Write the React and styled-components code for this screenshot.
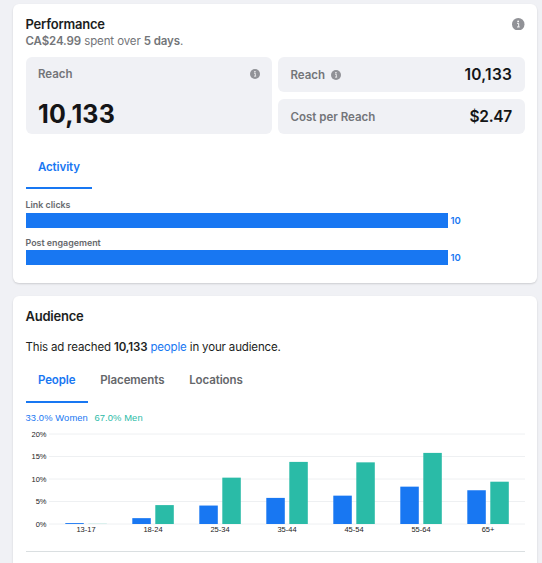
import styled, { createGlobalStyle } from 'styled-components'

const GlobalStyle = createGlobalStyle`
    * {
        box-sizing: border-box;
    }

    body {
        margin: 0;
        background-color: #f0f1f5;
        font-family: Inter, "Liberation Sans", sans-serif;
        color: #1c1e21;
        overflow: hidden;
    }
`;

const Page = styled.main`
    height: 563px;
    padding: 4px 5px 0 13px;
    display: flex;
    flex-direction: column;
    gap: 12.5px;
    overflow: hidden;
`;

const Card = styled.section`
    flex: none;
    height: ${({ $height }) => $height}px;
    padding: 12px 12.5px 0 12.5px;
    background-color: #fff;
    border-radius: 6px;
    box-shadow: 0 1px 2px #00000026;
`;

const CardHeader = styled.header`
    display: flex;
    align-items: center;
    justify-content: space-between;
    height: 16px;
`;

const Title = styled.h2`
    margin: 0;
    font-size: 13px;
    font-weight: 600;
    line-height: 16px;
    letter-spacing: -0.22px;
`;

const Spent = styled.p`
    margin: 1px 0 0;
    font-size: 11.5px;
    line-height: 16px;
    letter-spacing: -0.11px;
    color: #737579;

    b {
        font-weight: 600;
    }
`;

const Metrics = styled.div`
    margin-top: 8px;
    display: grid;
    grid-template-columns: 1fr 1fr;
    grid-template-rows: 35px 35px;
    gap: 7px 6px;
`;

const Metric = styled.div`
    padding: 0 12.5px;
    display: flex;
    align-items: center;
    justify-content: space-between;
    background-color: #f0f1f5;
    border-radius: 6px;
`;

const MainMetric = styled(Metric)`
    grid-row: span 2;
    padding: 9px 12.5px 5px;
    flex-direction: column;
    align-items: stretch;
`;

const MetricHead = styled.div`
    display: flex;
    align-items: center;
    justify-content: ${({ $spread }) => ($spread ? 'space-between' : 'flex-start')};
    gap: 6px;
`;

const MetricLabel = styled.span`
    font-size: 11.5px;
    font-weight: 600;
    line-height: 16px;
    color: #737579;
`;

const MetricValue = styled.strong`
    font-size: ${({ $large }) => ($large ? 25 : 15.5)}px;
    font-weight: ${({ $large }) => ($large ? 700 : 600)};
    line-height: ${({ $large }) => ($large ? 30 : 20)}px;
    letter-spacing: ${({ $spacing }) => $spacing || 0}px;
    color: #141517;
`;

const Tabs = styled.nav`
    margin-top: ${({ $top }) => $top}px;
    display: flex;
`;

const Tab = styled.button`
    height: 45px;
    padding: 2px 12.4px 0;
    border: 0;
    border-bottom: 2px solid ${({ $active }) => ($active ? '#1877f2' : 'transparent')};
    background: none;
    font-family: inherit;
    font-size: 11.5px;
    font-weight: 600;
    letter-spacing: -0.09px;
    color: ${({ $active }) => ($active ? '#1877f2' : '#65676b')};
`;

const Activities = styled.div`
    margin-top: 10px;
    display: flex;
    flex-direction: column;
    gap: 9px;
`;

const ActivityLabel = styled.div`
    height: 13.6px;
    font-size: 8.9px;
    font-weight: 600;
    line-height: 12px;
    color: #65676b;
`;

const ActivityRow = styled.div`
    display: flex;
    align-items: center;
    gap: 3px;
    height: 15px;
    font-size: 9.5px;
    font-weight: 600;
    color: #1877f2;
`;

const ActivityBar = styled.div`
    width: 422px;
    height: 15px;
    background-color: #1877f2;
`;

const Summary = styled.p`
    margin: 15px 0 0;
    font-size: 11.5px;
    line-height: 16px;
    letter-spacing: -0.15px;

    b {
        font-weight: 600;
    }
`;

const Link = styled.a`
    color: #1877f2;
`;

const Legend = styled.div`
    margin-top: 9px;
    display: flex;
    gap: 6.5px;
    font-family: "Liberation Sans", Arial, sans-serif;
    font-size: 9.4px;
    line-height: 12px;
    letter-spacing: 0.1px;
`;

const LegendItem = styled.span`
    color: ${({ $color }) => $color};
`;

const ChartSvg = styled.svg`
    display: block;
    margin-top: 2px;
    font-family: "Liberation Sans", Arial, sans-serif;
    font-size: 7.5px;
`;

const Divider = styled.hr`
    margin: 11px 0 0;
    border: 0;
    border-top: 1px solid #dadfe1;
`;

const WOMEN = '#1877f2'
const MEN = '#2abba7'

const activities = [
    { name: 'Link clicks', value: 10 },
    { name: 'Post engagement', value: 10 },
]

const ages = [
    { range: '13-17', women: 0.2, men: 0.03 },
    { range: '18-24', women: 1.3, men: 4.2 },
    { range: '25-34', women: 4.1, men: 10.3 },
    { range: '35-44', women: 5.8, men: 13.8 },
    { range: '45-54', women: 6.3, men: 13.7 },
    { range: '55-64', women: 8.3, men: 15.8 },
    { range: '65+', women: 7.5, men: 9.4 },
]

function InfoIcon({ size }) {
    return (
        <svg width={size} height={size} viewBox="0 0 12 12">
            <circle cx="6" cy="6" r="6" fill="#919297" />
            <circle cx="5.9" cy="3.2" r="0.9" fill="#fff" />
            <path d="M4.8 5.1h1.6v3.4M4.8 8.6h2.6" fill="none" stroke="#fff" strokeWidth="0.9" />
        </svg>
    )
}

function AgeChart() {
    const base = 98
    const scale = 4.5

    return (
        <ChartSvg width="499" height="114" viewBox="0 0 499 114">
            {[20, 15, 10, 5, 0].map((tick) => (
                <g key={tick}>
                    <line x1="23" x2="499" y1={base - tick * scale} y2={base - tick * scale} stroke="#eef0f2" />
                    <text x="20.5" y={base + 2.8 - tick * scale} textAnchor="end" fill="#222">{tick}%</text>
                </g>
            ))}
            {ages.map(({ range, women, men }, i) => (
                <g key={range} transform={`translate(${39.3 + i * 67} 0)`}>
                    <rect width="18.5" height={women * scale} y={base - women * scale} fill={WOMEN} />
                    <rect x="23" width="18.5" height={men * scale} y={base - men * scale} fill={MEN} />
                    <text x="20.7" y={base + 8} textAnchor="middle" fill="#222">{range}</text>
                </g>
            ))}
        </ChartSvg>
    )
}

function Performance() {
    return (
        <Card $height={279}>
            <CardHeader>
                <Title>Performance</Title>
                <InfoIcon size={12.5} />
            </CardHeader>
            <Spent><b>CA$24.99</b> spent over <b>5 days</b>.</Spent>
            <Metrics>
                <MainMetric>
                    <MetricHead $spread>
                        <MetricLabel>Reach</MetricLabel>
                        <InfoIcon size={10} />
                    </MetricHead>
                    <MetricValue $large $spacing={0.15}>10,133</MetricValue>
                </MainMetric>
                <Metric>
                    <MetricHead>
                        <MetricLabel>Reach</MetricLabel>
                        <InfoIcon size={10} />
                    </MetricHead>
                    <MetricValue $spacing={0.2}>10,133</MetricValue>
                </Metric>
                <Metric>
                    <MetricLabel>Cost per Reach</MetricLabel>
                    <MetricValue $spacing={-0.3}>$2.47</MetricValue>
                </Metric>
            </Metrics>
            <Tabs $top={10}>
                <Tab $active>Activity</Tab>
            </Tabs>
            <Activities>
                {activities.map(({ name, value }) => (
                    <div key={name}>
                        <ActivityLabel>{name}</ActivityLabel>
                        <ActivityRow>
                            <ActivityBar />
                            {value}
                        </ActivityRow>
                    </div>
                ))}
            </Activities>
        </Card>
    )
}

function Audience() {
    return (
        <Card $height={300}>
            <CardHeader>
                <Title>Audience</Title>
            </CardHeader>
            <Summary>This ad reached <b>10,133</b> <Link>people</Link> in your audience.</Summary>
            <Tabs $top={3}>
                <Tab $active>People</Tab>
                <Tab>Placements</Tab>
                <Tab>Locations</Tab>
            </Tabs>
            <Legend>
                <LegendItem $color={WOMEN}>33.0% Women</LegendItem>
                <LegendItem $color={MEN}>67.0% Men</LegendItem>
            </Legend>
            <AgeChart />
            <Divider />
        </Card>
    )
}

function App() {
    return (
        <Page>
            <GlobalStyle />
            <Performance />
            <Audience />
        </Page>
    )
}

export default App
